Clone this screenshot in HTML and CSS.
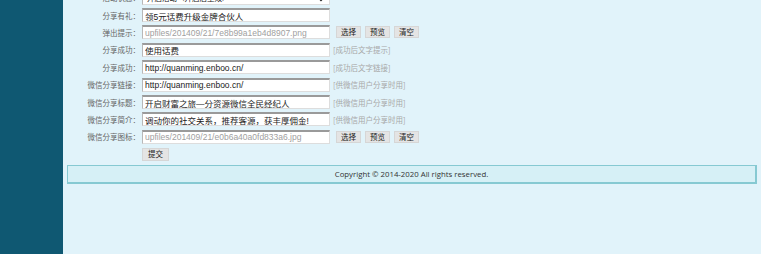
FILE: index.html
```html
<!DOCTYPE html>
<html lang="zh-CN">
<head>
    <meta charset="UTF-8">
    <title>分享设置</title>
    <link rel="stylesheet" href="styles.css">
</head>
<body>

<div class="page">
    <!-- Left navigation column -->
    <div class="sidebar"></div>

    <div class="main">
        <form class="share-form">
            <div class="row">
                <label>活动状态：</label>
                <select class="field select"><option>开启活动（开启后生效）</option></select>
            </div>
            <div class="row">
                <label>分享有礼：</label>
                <input class="field" type="text" value="领5元话费升级金牌合伙人">
            </div>
            <div class="row">
                <label>弹出提示：</label>
                <input class="field muted" type="text" value="upfiles/201409/21/7e8b99a1eb4d8907.png">
                <button type="button" class="btn">选择</button>
                <button type="button" class="btn">预览</button>
                <button type="button" class="btn">清空</button>
            </div>
            <div class="row">
                <label>分享成功：</label>
                <input class="field" type="text" value="使用话费">
                <span class="hint">[成功后文字提示]</span>
            </div>
            <div class="row">
                <label>分享成功：</label>
                <input class="field" type="text" value="http://quanming.enboo.cn/">
                <span class="hint">[成功后文字链接]</span>
            </div>
            <div class="row">
                <label>微信分享链接：</label>
                <input class="field" type="text" value="http://quanming.enboo.cn/">
                <span class="hint">[供微信用户分享时用]</span>
            </div>
            <div class="row">
                <label>微信分享标题：</label>
                <input class="field" type="text" value="开启财富之旅—分资源微信全民经纪人">
                <span class="hint">[供微信用户分享时用]</span>
            </div>
            <div class="row">
                <label>微信分享简介：</label>
                <input class="field" type="text" value="调动你的社交关系，推荐客源，获丰厚佣金!">
                <span class="hint">[供微信用户分享时用]</span>
            </div>
            <div class="row">
                <label>微信分享图标：</label>
                <input class="field muted" type="text" value="upfiles/201409/21/e0b6a40a0fd833a6.jpg">
                <button type="button" class="btn">选择</button>
                <button type="button" class="btn">预览</button>
                <button type="button" class="btn">清空</button>
            </div>
            <div class="row">
                <label></label>
                <button type="button" class="btn submit">提交</button>
            </div>
        </form>

        <!-- Footer -->
        <div class="footer">Copyright © 2014-2020 All rights reserved.</div>
    </div>
</div>

</body>
</html>
```

FILE: styles.css
```css
/* Page styling */
body {
    margin: 0;
    background-color: #FFFFFF;
    font-family: 'Noto Sans CJK SC', sans-serif;
    overflow: hidden;
}

.page {
    display: flex;
    height: 254px;
}

/* Left navigation column */
.sidebar {
    width: 63px;
    background-color: #0F5872; /* Dark teal */
}

.main {
    width: 698px;
    background-color: #E1F3FA; /* Light blue background */
    overflow: hidden;
}

/* Form rows (page is scrolled a little) */
.share-form {
    margin-top: -11px;
}

.row {
    display: flex;
    align-items: center;
    height: 17.4px;
}

.row label {
    width: 77px;
    text-align: right;
    font-size: 7.5px;
    color: #666666;
    white-space: nowrap;
}

/* Text inputs */
.field {
    width: 188px;
    height: 14px;
    margin: 0 0 0 2px;
    padding: 0 2px;
    box-sizing: border-box;
    border: 1px solid #DDDDDD;
    border-top: 2px solid #9A9A9A;
    border-left: 1px solid #B8B8B8;
    background-color: #FFFFFF;
    font-family: 'Liberation Sans', 'Noto Sans CJK SC', sans-serif;
    font-size: 8.5px;
    color: #222222;
}

.field.muted {
    color: #A0A0A0;
}

.select {
    padding: 0;
    font-size: 7.5px;
}

/* Small grey buttons */
.btn {
    height: 12px;
    padding: 0 4px;
    margin-left: 4px;
    border: 1px solid #D6D6D6;
    background-color: #E4E4E4;
    font-family: 'Noto Sans CJK SC', sans-serif;
    font-size: 7.5px;
    line-height: 10px;
    color: #222222;
}

.btn:first-of-type {
    margin-left: 6px;
}

.btn.submit {
    margin-left: 2px;
    padding: 0 5px;
    height: 13px;
}

/* Hint text next to fields */
.hint {
    margin-left: 3px;
    font-size: 7.5px;
    color: #A8A8A8;
}

/* Footer bar */
.footer {
    margin: 2px 0 0 4px;
    width: 690px;
    height: 19px;
    box-sizing: border-box;
    border: 1px solid #86C9D2;
    border-bottom-width: 2px;
    border-right-width: 2px;
    background-color: #D6F0F6;
    font-family: 'Open Sans', sans-serif;
    font-size: 7.8px;
    line-height: 16px;
    text-align: center;
    color: #333333;
}
```
